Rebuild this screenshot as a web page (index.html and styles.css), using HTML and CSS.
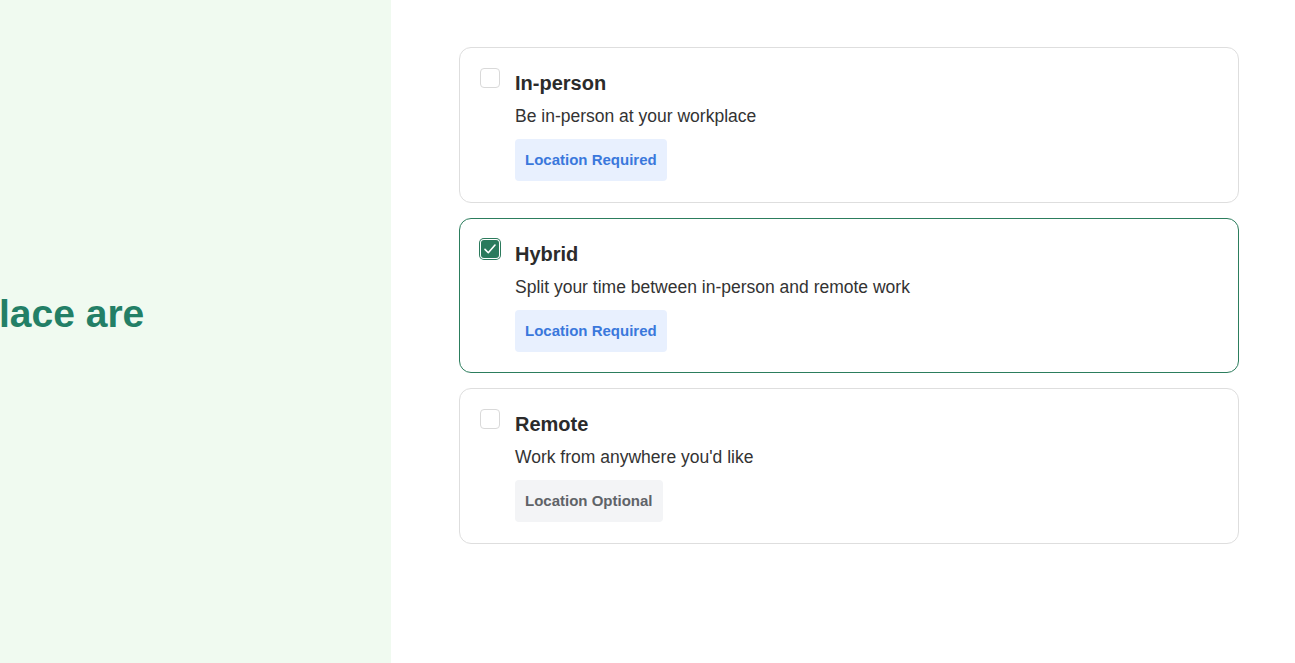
FILE: index.html
```html
<!DOCTYPE html>
<html lang="en">
<head>
<meta charset="utf-8">
<title>Workplace type</title>
<link rel="stylesheet" href="styles.css">
</head>
<body>
<div class="page">
  <aside class="side">
    <h1 class="side-title">lace are</h1>
  </aside>
  <main class="main">
    <div class="options">
      <label class="card">
        <span class="check"></span>
        <span class="body">
          <span class="title">In-person</span>
          <span class="desc">Be in-person at your workplace</span>
          <span class="badge badge-req">Location Required</span>
        </span>
      </label>
      <label class="card card-on">
        <span class="check check-on">
          <svg viewBox="0 0 18 18" width="18" height="18"><path d="M4 9.4l3.3 3.3L14 5" fill="none" stroke="#fff" stroke-width="1.6" stroke-linecap="round" stroke-linejoin="round"/></svg>
        </span>
        <span class="body">
          <span class="title">Hybrid</span>
          <span class="desc">Split your time between in-person and remote work</span>
          <span class="badge badge-req">Location Required</span>
        </span>
      </label>
      <label class="card">
        <span class="check"></span>
        <span class="body">
          <span class="title">Remote</span>
          <span class="desc">Work from anywhere you'd like</span>
          <span class="badge badge-opt">Location Optional</span>
        </span>
      </label>
    </div>
  </main>
</div>
</body>
</html>
```
FILE: styles.css
```css
html, body {
  margin: 0;
  padding: 0;
  background: #fff;
}
body {
  font-family: "Liberation Sans", Arial, sans-serif;
  color: #2b2b2b;
}
.page {
  display: flex;
  height: 663px;
}
.side {
  width: 391px;
  flex: none;
  background: #f0faf0;
  overflow: hidden;
  display: flex;
  align-items: center;
}
.side-title {
  margin: 0 0 34px -1px;
  white-space: nowrap;
  font-size: 39px;
  font-weight: 700;
  color: #237f66;
  line-height: 1.2;
}
.main {
  flex: 1;
  padding: 47px 56px 0 68px;
}
.options {
  display: flex;
  flex-direction: column;
  gap: 15px;
}
.card {
  display: flex;
  gap: 15px;
  border: 1px solid #dedede;
  border-radius: 12px;
  padding: 20px;
  height: 155.5px;
  box-sizing: border-box;
  cursor: pointer;
}
.card-on {
  border-color: #2c7d5d;
}
.check {
  width: 20px;
  height: 20px;
  box-sizing: border-box;
  border: 1px solid #d9d9d9;
  border-radius: 4px;
  flex: none;
  background: #fff;
}
.check-on {
  margin-top: 1px;
  width: 18px;
  height: 18px;
  margin-left: 1px;
  margin-right: 1px;
  border: none;
  background: #2b7a5c;
  border-radius: 3px;
  box-shadow: 0 0 0 1px #fff, 0 0 0 2px #2b7a5c;
  display: flex;
  align-items: center;
  justify-content: center;
}
.check-on svg {
  display: block;
}
.body {
  display: flex;
  flex-direction: column;
  align-items: flex-start;
}
.title {
  font-size: 20px;
  font-weight: 700;
  color: #2b2b2b;
  line-height: 24px;
  margin-top: 3px;
}
.desc {
  font-size: 17.5px;
  color: #333;
  line-height: 22px;
  margin-top: 10px;
}
.badge {
  margin-top: 12px;
  font-size: 15px;
  font-weight: 700;
  line-height: 18px;
  padding: 12px 10px;
  border-radius: 4px;
}
.badge-req {
  background: #e8f0fe;
  color: #3a78dc;
}
.badge-opt {
  background: #f3f4f6;
  color: #5f6368;
}
```
